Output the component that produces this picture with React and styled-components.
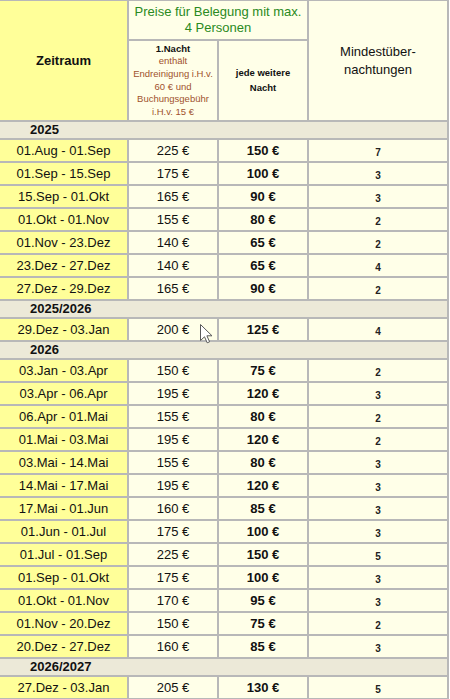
import React from 'react';
import styled, { createGlobalStyle } from 'styled-components';

const GlobalStyle = createGlobalStyle`
  body {
    margin: 0;
    background: #ffffff;
    font-family: "Liberation Sans", Arial, sans-serif;
    overflow: hidden;
  }
`;

const Page = styled.div`
  position: relative;
  width: 450px;
`;

const Table = styled.table`
  width: 451px;
  margin: -1px 0 0 -2px;
  table-layout: fixed;
  border-collapse: separate;
  border-spacing: 2px;
  background: #b8b8b8;
  font-size: 13px;
  color: #111;
`;

const Col = styled.col`
  width: ${({ w }) => w}px;
`;

const HeadCell = styled.th`
  padding: 0;
  text-align: center;
  vertical-align: middle;
  background: ${({ yellow }) => (yellow ? '#ffff99' : '#ffffe8')};
  font-weight: ${({ bold }) => (bold ? 700 : 400)};
  font-size: 13px;
  line-height: 18px;
  color: #111;
`;

const PriceHead = styled.th`
  height: 38px;
  padding: 0;
  background: #ffffe8;
  color: #2a8a22;
  font-weight: 400;
  font-size: 13px;
  line-height: 16px;
  vertical-align: middle;
`;

const SubHead = styled.th`
  height: 79px;
  padding: 0;
  background: #ffffe8;
  font-size: 9.5px;
  font-weight: 700;
  line-height: ${({ tight }) => (tight ? '12.6px' : '14.5px')};
  color: #111;
  vertical-align: middle;
`;

const Note = styled.span`
  font-weight: 400;
  color: #a0522d;
`;

const YearCell = styled.td`
  height: 16px;
  padding: 0 0 0 30px;
  background: #ece9d8;
  font-weight: 700;
  line-height: 16px;
`;

const DateCell = styled.td`
  height: 21px;
  padding: 0;
  background: #ffff99;
  text-align: center;
  vertical-align: middle;
`;

const PriceCell = styled.td`
  height: 21px;
  padding: 0;
  background: #ffffe8;
  text-align: center;
  vertical-align: middle;
  font-weight: ${({ bold }) => (bold ? 700 : 400)};
`;

const NightsCell = styled.td`
  height: 18px;
  padding: 3px 0 0;
  background: #ffffe8;
  text-align: center;
  vertical-align: middle;
  font-size: 10px;
  font-weight: 700;
  color: #222;
`;

const Cursor = styled.svg`
  position: absolute;
  left: 200px;
  top: 325px;
  pointer-events: none;
`;

const seasons = [
  {
    year: '2025',
    rows: [
      ['01.Aug - 01.Sep', 225, 150, 7],
      ['01.Sep - 15.Sep', 175, 100, 3],
      ['15.Sep - 01.Okt', 165, 90, 3],
      ['01.Okt - 01.Nov', 155, 80, 2],
      ['01.Nov - 23.Dez', 140, 65, 2],
      ['23.Dez - 27.Dez', 140, 65, 4],
      ['27.Dez - 29.Dez', 165, 90, 2],
    ],
  },
  {
    year: '2025/2026',
    rows: [['29.Dez - 03.Jan', 200, 125, 4]],
  },
  {
    year: '2026',
    rows: [
      ['03.Jan - 03.Apr', 150, 75, 2],
      ['03.Apr - 06.Apr', 195, 120, 3],
      ['06.Apr - 01.Mai', 155, 80, 2],
      ['01.Mai - 03.Mai', 195, 120, 2],
      ['03.Mai - 14.Mai', 155, 80, 3],
      ['14.Mai - 17.Mai', 195, 120, 3],
      ['17.Mai - 01.Jun', 160, 85, 3],
      ['01.Jun - 01.Jul', 175, 100, 3],
      ['01.Jul - 01.Sep', 225, 150, 5],
      ['01.Sep - 01.Okt', 175, 100, 3],
      ['01.Okt - 01.Nov', 170, 95, 3],
      ['01.Nov - 20.Dez', 150, 75, 2],
      ['20.Dez - 27.Dez', 160, 85, 3],
    ],
  },
  {
    year: '2026/2027',
    rows: [['27.Dez - 03.Jan', 205, 130, 5]],
  },
];

const App = () => (
  <Page>
    <GlobalStyle />
    <Table>
      <colgroup>
        <Col w={127} />
        <Col w={88} />
        <Col w={88} />
        <Col w={138} />
      </colgroup>
      <thead>
        <tr>
          <HeadCell rowSpan={2} yellow bold>
            Zeitraum
          </HeadCell>
          <PriceHead colSpan={2}>
            Preise für Belegung mit max.
            <br />4 Personen
          </PriceHead>
          <HeadCell rowSpan={2}>
            Mindestüber-
            <br />
            nachtungen
          </HeadCell>
        </tr>
        <tr>
          <SubHead tight>
            1.Nacht
            <br />
            <Note>
              enthält
              <br />
              Endreinigung i.H.v.
              <br />
              60 € und
              <br />
              Buchungsgebühr
              <br />
              i.H.v. 15 €
            </Note>
          </SubHead>
          <SubHead>
            jede weitere
            <br />
            Nacht
          </SubHead>
        </tr>
      </thead>
      <tbody>
        {seasons.map(({ year, rows }) => (
          <React.Fragment key={year}>
            <tr>
              <YearCell colSpan={4}>{year}</YearCell>
            </tr>
            {rows.map(([range, first, next, nights]) => (
              <tr key={year + range}>
                <DateCell>{range}</DateCell>
                <PriceCell>{first} €</PriceCell>
                <PriceCell bold>{next} €</PriceCell>
                <NightsCell>{nights}</NightsCell>
              </tr>
            ))}
          </React.Fragment>
        ))}
      </tbody>
    </Table>
    <Cursor width="13" height="20" viewBox="0 0 13 20">
      <path
        d="M0.5 0.5 L0.5 16.5 L4.5 12.8 L7.2 18.8 L9.6 17.8 L6.9 11.8 L12 11.8 Z"
        fill="#ffffff"
        stroke="#5a5a5a"
        strokeWidth="1"
        strokeLinejoin="round"
      />
    </Cursor>
  </Page>
);

export default App;
